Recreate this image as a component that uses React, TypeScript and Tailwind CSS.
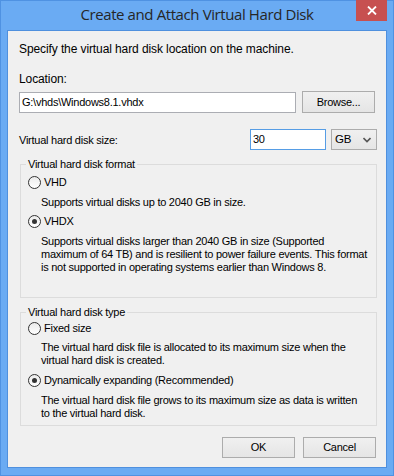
import React from "react";

function Radio({ checked, label }: { checked?: boolean; label: string }) {
  return (
    <div className="flex items-center h-[15px]">
      <span className="ml-[7px] w-[13px] h-[13px] rounded-full border border-[#333333] bg-gradient-to-b from-[#ebebeb] to-[#ffffff] flex items-center justify-center">
        {checked && <span className="w-[5px] h-[5px] rounded-full bg-[#333333]" />}
      </span>
      <span className="ml-[3px]">{label}</span>
    </div>
  );
}

function Desc({ lines }: { lines: string[] }) {
  return (
    <div className="ml-[20px] leading-[13px] whitespace-nowrap">
      {lines.map((l) => (
        <p key={l}>{l}</p>
      ))}
    </div>
  );
}

function Btn({ children, tall }: { children: React.ReactNode; tall?: boolean }) {
  return (
    <button
      className={
        tall
          ? "w-[73px] h-[22px] border border-[#acacac] bg-gradient-to-b from-[#f0f0f0] to-[#e5e5e5] text-black leading-[20px]"
          : "w-[73px] h-[21px] border border-[#acacac] bg-gradient-to-b from-[#f0f0f0] to-[#e5e5e5] text-black leading-[19px]"
      }
    >
      {children}
    </button>
  );
}

export default function App() {
  return (
    <div className="w-[394px] h-[476px] bg-[#6aabf3] border border-[#4f92e2] flex flex-col px-[6px] pb-[7px] font-['Liberation_Sans',Arial,sans-serif] text-[11px] tracking-[-0.25px] text-black">
      <div className="h-[29px] grid grid-cols-[1fr_auto_1fr] items-start">
        <div />
        <div className="pt-[3px] text-[15px] tracking-[-0.4px] text-[#262626] font-['Open_Sans','Liberation_Sans',sans-serif] leading-[20px]">
          Create and Attach Virtual Hard Disk
        </div>
        <div className="justify-self-end -mt-[1px] w-[31px] h-[21px] bg-[#c75050] flex items-center justify-center">
          <svg width="10" height="9" viewBox="0 0 10 9">
            <path d="M1 0.5 L9 8.5 M9 0.5 L1 8.5" stroke="#ffffff" strokeWidth="1.8" />
          </svg>
        </div>
      </div>

      <div className="flex-1 border border-[#4f90de] bg-[#f0f0f0] pl-[11px] pr-[10px] pt-[10px]">
        <p className="text-[12px] tracking-[-0.1px] leading-[16px]">Specify the virtual hard disk location on the machine.</p>

        <p className="mt-[14px] text-[12px] tracking-[-0.1px] leading-[16px]">Location:</p>
        <div className="mt-[4px] flex items-end gap-[6px]">
          <div className="w-[277px] h-[21px] border border-[#abadb3] bg-white px-[2px] leading-[19px]">
            G:\vhds\Windows8.1.vhdx
          </div>
          <Btn tall>Browse...</Btn>
        </div>

        <div className="mt-[16px] flex items-center h-[21px]">
          <span className="flex-1 pt-[1px]">Virtual hard disk size:</span>
          <div className="w-[76px] h-[21px] border border-[#569de5] bg-white px-[2px] leading-[19px]">30</div>
          <div className="ml-[5px] mr-[-1px] w-[46px] h-[21px] border border-[#acacac] bg-gradient-to-b from-[#f0f0f0] to-[#e5e5e5] flex items-center justify-between pl-[3px] pr-[5px] leading-[19px] text-[11.5px]">
            <span>GB</span>
            <svg width="8" height="6" viewBox="0 0 8 6">
              <path d="M0.5 1 L4 4.5 L7.5 1" stroke="#555555" strokeWidth="1.6" fill="none" />
            </svg>
          </div>
        </div>

        <fieldset className="mt-[7px] ml-[1px] mr-[-1px] border border-[#dcdcdc] pb-[23px] leading-[15px]">
          <legend className="ml-[5px] px-[2px]">Virtual hard disk format</legend>
          <div className="mt-[3px]">
            <Radio label="VHD" />
            <div className="mt-[6px]">
              <Desc lines={["Supports virtual disks up to 2040 GB in size."]} />
            </div>
            <div className="mt-[5px]">
              <Radio checked label="VHDX" />
            </div>
            <div className="mt-[6px]">
              <Desc
                lines={[
                  "Supports virtual disks larger than 2040 GB in size (Supported",
                  "maximum of 64 TB) and is resilient to power failure events. This format",
                  "is not supported in operating systems earlier than Windows 8.",
                ]}
              />
            </div>
          </div>
        </fieldset>

        <fieldset className="mt-[7px] ml-[1px] mr-[-1px] border border-[#dcdcdc] pb-[5px] leading-[15px]">
          <legend className="ml-[5px] px-[2px]">Virtual hard disk type</legend>
          <div className="mt-[1px]">
            <Radio label="Fixed size" />
            <div className="mt-[5px]">
              <Desc
                lines={[
                  "The virtual hard disk file is allocated to its maximum size when the",
                  "virtual hard disk is created.",
                ]}
              />
            </div>
            <div className="mt-[6px]">
              <Radio checked label="Dynamically expanding (Recommended)" />
            </div>
            <div className="mt-[6px]">
              <Desc
                lines={[
                  "The virtual hard disk file grows to its maximum size as data is written",
                  "to the virtual hard disk.",
                ]}
              />
            </div>
          </div>
        </fieldset>

        <div className="mt-[11px] flex justify-end gap-[8px]">
          <Btn>OK</Btn>
          <Btn>Cancel</Btn>
        </div>
      </div>
    </div>
  );
}
